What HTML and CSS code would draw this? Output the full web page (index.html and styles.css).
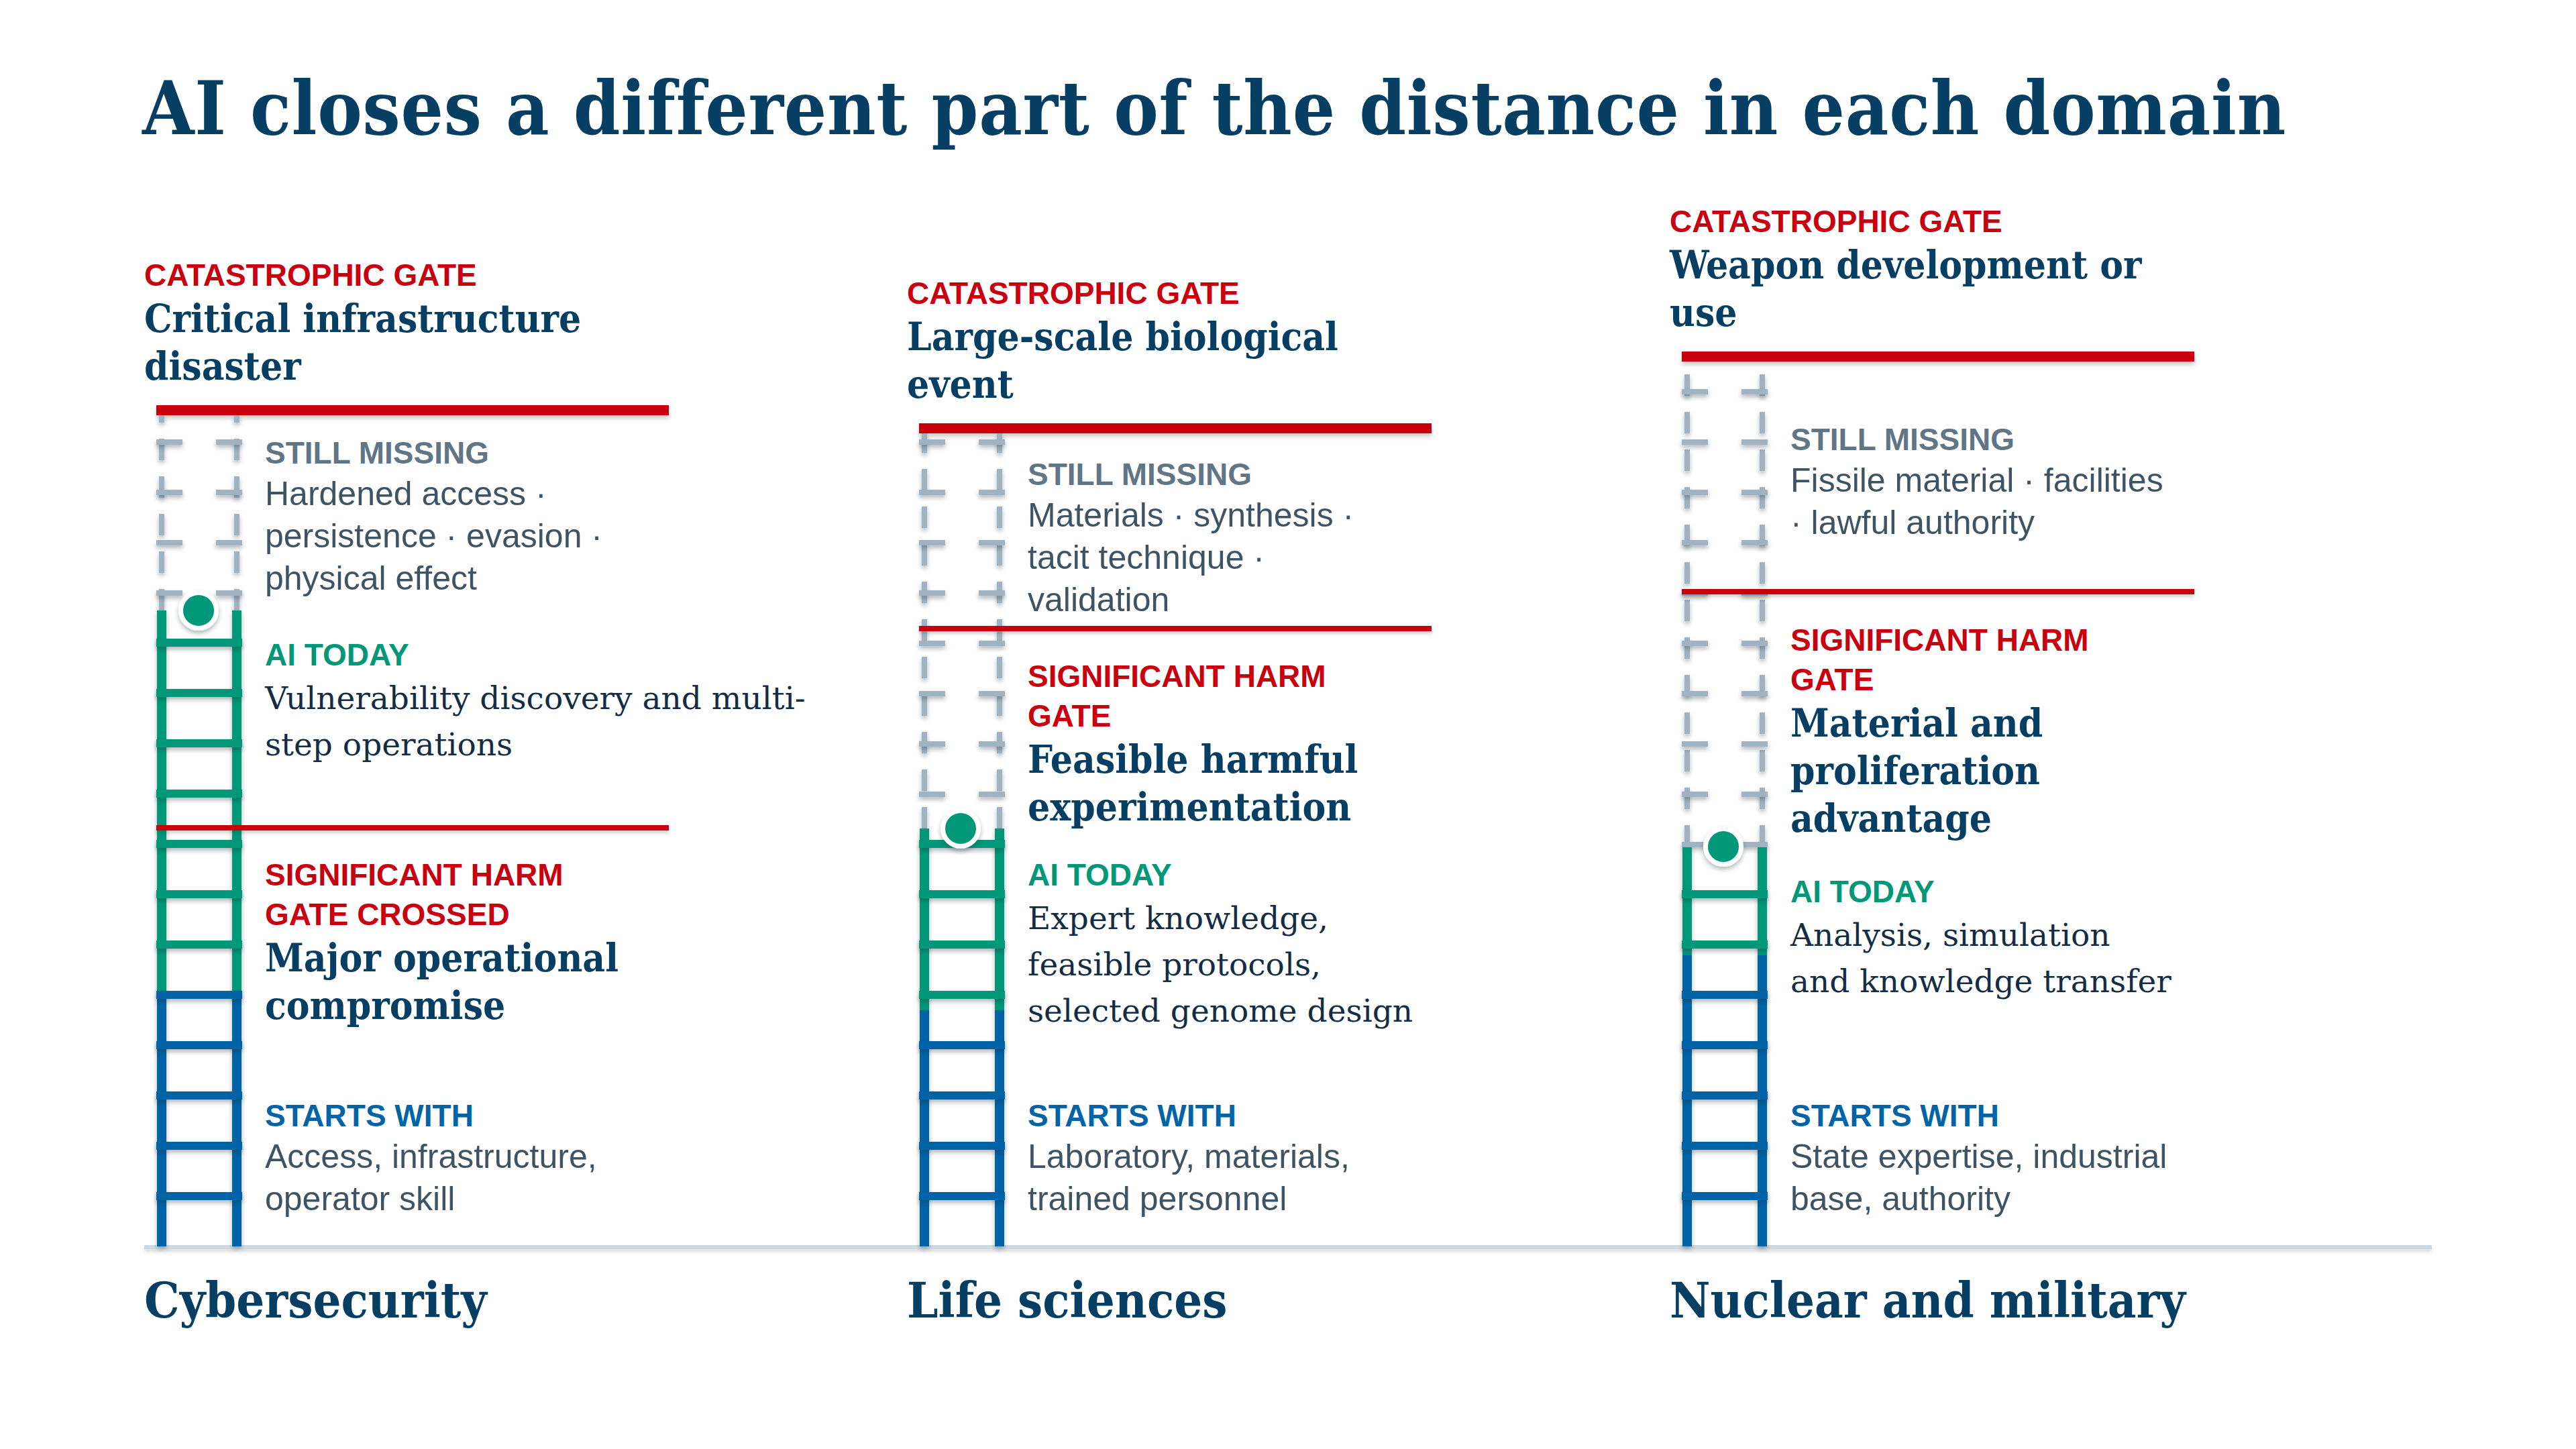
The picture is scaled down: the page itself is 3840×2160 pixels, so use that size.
FILE: index.html
```html
<!DOCTYPE html>
<html lang="en">
<head>
<meta charset="utf-8">
<title>AI closes a different part of the distance in each domain</title>
<link rel="stylesheet" href="styles.css">
</head>
<body>
<main class="page">
  <h1 class="title">AI closes a different part of the distance in each domain</h1>
  <section class="chart">
    <div class="cols">
      <!-- Column 1 -->
      <div class="col c1">
        <div class="head">
          <div class="label red">CATASTROPHIC GATE</div>
          <div class="gate-title">Critical infrastructure<br>disaster</div>
          <div class="gate-bar"></div>
        </div>
        <div class="body">
          <svg class="ladder" width="128" height="1239" viewBox="0 0 128 1239">
            <defs>
              <filter id="sh1" filterUnits="userSpaceOnUse" x="-30" y="-30" width="188" height="1299">
                <feDropShadow dx="0" dy="4" stdDeviation="3" flood-color="#1b2630" flood-opacity="0.33"/>
              </filter>
            </defs>
            <g class="dash" filter="url(#sh1)">
              <line x1="8" y1="291" x2="8" y2="0"/>
              <line x1="120" y1="291" x2="120" y2="0"/>
            </g>
            <g class="stub" filter="url(#sh1)">
              <rect x="0" y="261" width="39" height="8"/><rect x="89" y="261" width="39" height="8"/>
              <rect x="0" y="186" width="39" height="8"/><rect x="89" y="186" width="39" height="8"/>
              <rect x="0" y="111" width="39" height="8"/><rect x="89" y="111" width="39" height="8"/>
              <rect x="0" y="36" width="39" height="8"/><rect x="89" y="36" width="39" height="8"/>
            </g>
            <g class="green" filter="url(#sh1)">
              <rect x="1" y="291" width="14" height="567"/><rect x="113" y="291" width="14" height="567"/>
            </g>
            <g class="blue" filter="url(#sh1)">
              <rect x="1" y="858" width="14" height="381"/><rect x="113" y="858" width="14" height="381"/>
            </g>
            <g class="green" filter="url(#sh1)"><rect x="0" y="333" width="128" height="12"/></g>
            <g class="green" filter="url(#sh1)"><rect x="0" y="408" width="128" height="12"/></g>
            <g class="green" filter="url(#sh1)"><rect x="0" y="483" width="128" height="12"/></g>
            <g class="green" filter="url(#sh1)"><rect x="0" y="558" width="128" height="12"/></g>
            <g class="green" filter="url(#sh1)"><rect x="0" y="633" width="128" height="12"/></g>
            <g class="green" filter="url(#sh1)"><rect x="0" y="708" width="128" height="12"/></g>
            <g class="green" filter="url(#sh1)"><rect x="0" y="783" width="128" height="12"/></g>
            <g class="blue" filter="url(#sh1)"><rect x="0" y="858" width="128" height="12"/></g>
            <g class="blue" filter="url(#sh1)"><rect x="0" y="933" width="128" height="12"/></g>
            <g class="blue" filter="url(#sh1)"><rect x="0" y="1008" width="128" height="12"/></g>
            <g class="blue" filter="url(#sh1)"><rect x="0" y="1083" width="128" height="12"/></g>
            <g class="blue" filter="url(#sh1)"><rect x="0" y="1158" width="128" height="12"/></g>
            <circle class="dot" cx="63" cy="291" r="26.5" filter="url(#sh1)"/>
          </svg>
          <div class="text">
            <div class="sec missing">
              <div class="label gray">STILL MISSING</div>
              <div class="sans">Hardened access ·<br>persistence · evasion ·<br>physical effect</div>
            </div>
            <div class="sec ai">
              <div class="label green">AI TODAY</div>
              <div class="serif">Vulnerability discovery and multi-<br>step operations</div>
            </div>
            <div class="thin-gate"></div>
            <div class="sec harm">
              <div class="label red">SIGNIFICANT HARM<br>GATE CROSSED</div>
              <div class="gate-title">Major operational<br>compromise</div>
            </div>
            <div class="sec starts">
              <div class="label blue">STARTS WITH</div>
              <div class="sans">Access, infrastructure,<br>operator skill</div>
            </div>
          </div>
        </div>
      </div>

      <!-- Column 2 -->
      <div class="col c2">
        <div class="head">
          <div class="label red">CATASTROPHIC GATE</div>
          <div class="gate-title">Large-scale biological<br>event</div>
          <div class="gate-bar"></div>
        </div>
        <div class="body">
          <svg class="ladder" width="128" height="1212" viewBox="0 0 128 1212">
            <defs>
              <filter id="sh2" filterUnits="userSpaceOnUse" x="-30" y="-30" width="188" height="1272">
                <feDropShadow dx="0" dy="4" stdDeviation="3" flood-color="#1b2630" flood-opacity="0.33"/>
              </filter>
            </defs>
            <g class="dash" filter="url(#sh2)">
              <line x1="8" y1="589" x2="8" y2="0"/>
              <line x1="120" y1="589" x2="120" y2="0"/>
            </g>
            <g class="stub" filter="url(#sh2)">
              <rect x="0" y="534" width="39" height="8"/><rect x="89" y="534" width="39" height="8"/>
              <rect x="0" y="459" width="39" height="8"/><rect x="89" y="459" width="39" height="8"/>
              <rect x="0" y="384" width="39" height="8"/><rect x="89" y="384" width="39" height="8"/>
              <rect x="0" y="309" width="39" height="8"/><rect x="89" y="309" width="39" height="8"/>
              <rect x="0" y="234" width="39" height="8"/><rect x="89" y="234" width="39" height="8"/>
              <rect x="0" y="159" width="39" height="8"/><rect x="89" y="159" width="39" height="8"/>
              <rect x="0" y="84" width="39" height="8"/><rect x="89" y="84" width="39" height="8"/>
              <rect x="0" y="9" width="39" height="8"/><rect x="89" y="9" width="39" height="8"/>
            </g>
            <g class="green" filter="url(#sh2)">
              <rect x="1" y="589" width="14" height="271"/><rect x="113" y="589" width="14" height="271"/>
            </g>
            <g class="blue" filter="url(#sh2)">
              <rect x="1" y="860" width="14" height="352"/><rect x="113" y="860" width="14" height="352"/>
            </g>
            <g class="green" filter="url(#sh2)"><rect x="0" y="606" width="128" height="12"/></g>
            <g class="green" filter="url(#sh2)"><rect x="0" y="681" width="128" height="12"/></g>
            <g class="green" filter="url(#sh2)"><rect x="0" y="756" width="128" height="12"/></g>
            <g class="green" filter="url(#sh2)"><rect x="0" y="831" width="128" height="12"/></g>
            <g class="blue" filter="url(#sh2)"><rect x="0" y="906" width="128" height="12"/></g>
            <g class="blue" filter="url(#sh2)"><rect x="0" y="981" width="128" height="12"/></g>
            <g class="blue" filter="url(#sh2)"><rect x="0" y="1056" width="128" height="12"/></g>
            <g class="blue" filter="url(#sh2)"><rect x="0" y="1131" width="128" height="12"/></g>
            <circle class="dot" cx="62" cy="589" r="26.5" filter="url(#sh2)"/>
          </svg>
          <div class="text">
            <div class="sec missing">
              <div class="label gray">STILL MISSING</div>
              <div class="sans">Materials · synthesis ·<br>tacit technique ·<br>validation</div>
            </div>
            <div class="thin-gate"></div>
            <div class="sec harm">
              <div class="label red">SIGNIFICANT HARM<br>GATE</div>
              <div class="gate-title">Feasible harmful<br>experimentation</div>
            </div>
            <div class="sec ai">
              <div class="label green">AI TODAY</div>
              <div class="serif">Expert knowledge,<br>feasible protocols,<br>selected genome design</div>
            </div>
            <div class="sec starts">
              <div class="label blue">STARTS WITH</div>
              <div class="sans">Laboratory, materials,<br>trained personnel</div>
            </div>
          </div>
        </div>
      </div>

      <!-- Column 3 -->
      <div class="col c3">
        <div class="head">
          <div class="label red">CATASTROPHIC GATE</div>
          <div class="gate-title">Weapon development or<br>use</div>
          <div class="gate-bar"></div>
        </div>
        <div class="body">
          <svg class="ladder" width="128" height="1319" viewBox="0 0 128 1319">
            <defs>
              <filter id="sh3" filterUnits="userSpaceOnUse" x="-30" y="-30" width="188" height="1379">
                <feDropShadow dx="0" dy="4" stdDeviation="3" flood-color="#1b2630" flood-opacity="0.33"/>
              </filter>
            </defs>
            <g class="dash" filter="url(#sh3)">
              <line x1="8" y1="723" x2="8" y2="0"/>
              <line x1="120" y1="723" x2="120" y2="0"/>
            </g>
            <g class="stub" filter="url(#sh3)">
              <rect x="0" y="716" width="39" height="8"/><rect x="89" y="716" width="39" height="8"/>
              <rect x="0" y="641" width="39" height="8"/><rect x="89" y="641" width="39" height="8"/>
              <rect x="0" y="566" width="39" height="8"/><rect x="89" y="566" width="39" height="8"/>
              <rect x="0" y="491" width="39" height="8"/><rect x="89" y="491" width="39" height="8"/>
              <rect x="0" y="416" width="39" height="8"/><rect x="89" y="416" width="39" height="8"/>
              <rect x="0" y="341" width="39" height="8"/><rect x="89" y="341" width="39" height="8"/>
              <rect x="0" y="266" width="39" height="8"/><rect x="89" y="266" width="39" height="8"/>
              <rect x="0" y="191" width="39" height="8"/><rect x="89" y="191" width="39" height="8"/>
              <rect x="0" y="116" width="39" height="8"/><rect x="89" y="116" width="39" height="8"/>
              <rect x="0" y="41" width="39" height="8"/><rect x="89" y="41" width="39" height="8"/>
            </g>
            <g class="green" filter="url(#sh3)">
              <rect x="1" y="724" width="14" height="161"/><rect x="113" y="724" width="14" height="161"/>
            </g>
            <g class="blue" filter="url(#sh3)">
              <rect x="1" y="885" width="14" height="434"/><rect x="113" y="885" width="14" height="434"/>
            </g>
            <g class="green" filter="url(#sh3)"><rect x="0" y="788" width="128" height="12"/></g>
            <g class="green" filter="url(#sh3)"><rect x="0" y="863" width="128" height="12"/></g>
            <g class="blue" filter="url(#sh3)"><rect x="0" y="938" width="128" height="12"/></g>
            <g class="blue" filter="url(#sh3)"><rect x="0" y="1013" width="128" height="12"/></g>
            <g class="blue" filter="url(#sh3)"><rect x="0" y="1088" width="128" height="12"/></g>
            <g class="blue" filter="url(#sh3)"><rect x="0" y="1163" width="128" height="12"/></g>
            <g class="blue" filter="url(#sh3)"><rect x="0" y="1238" width="128" height="12"/></g>
            <circle class="dot" cx="62" cy="723" r="26.5" filter="url(#sh3)"/>
          </svg>
          <div class="text">
            <div class="sec missing">
              <div class="label gray">STILL MISSING</div>
              <div class="sans">Fissile material · facilities<br>· lawful authority</div>
            </div>
            <div class="thin-gate"></div>
            <div class="sec harm">
              <div class="label red">SIGNIFICANT HARM<br>GATE</div>
              <div class="gate-title">Material and<br>proliferation<br>advantage</div>
            </div>
            <div class="sec ai">
              <div class="label green">AI TODAY</div>
              <div class="serif">Analysis, simulation<br>and knowledge transfer</div>
            </div>
            <div class="sec starts">
              <div class="label blue">STARTS WITH</div>
              <div class="sans">State expertise, industrial<br>base, authority</div>
            </div>
          </div>
        </div>
      </div>
    </div>
    <div class="axis"></div>
    <div class="names">
      <div class="name">Cybersecurity</div>
      <div class="name">Life sciences</div>
      <div class="name">Nuclear and military</div>
    </div>
  </section>
</main>
</body>
</html>
```

FILE: styles.css
```css
html, body {
  margin: 0;
  padding: 0;
  background: #ffffff;
}

.page {
  width: 3840px;
  height: 2160px;
  box-sizing: border-box;
  padding: 101px 0 0 215px;
  overflow: hidden;
}

.title {
  margin: 0 0 0 -3px;
  font-family: "DejaVu Serif Condensed", "DejaVu Serif", serif;
  font-stretch: condensed;
  font-weight: 700;
  font-size: 111px;
  line-height: 120px;
  letter-spacing: 0.7px;
  color: #063f63;
  white-space: nowrap;
}

.chart {
  margin-top: 80px;
}

.cols {
  display: grid;
  grid-template-columns: 1137px 1137px 1fr;
  align-items: end;
}

.col {
  display: flex;
  flex-direction: column;
}

.label {
  font-family: "Liberation Sans", Arial, sans-serif;
  font-weight: 700;
  font-size: 46px;
  line-height: 59px;
  white-space: nowrap;
}

.label.red { color: #c8000f; }
.label.gray { color: #607585; }
.label.green { color: #009878; }
.label.blue { color: #0064a7; }

.gate-title {
  font-family: "DejaVu Serif Condensed", "DejaVu Serif", serif;
  font-stretch: condensed;
  font-weight: 700;
  font-size: 58px;
  line-height: 71px;
  color: #063f63;
  white-space: nowrap;
}

.gate-bar {
  width: 764px;
  height: 15px;
  margin: 22px 0 0 18px;
  background: #c8000d;
  box-shadow: 0 5px 6px rgba(30, 30, 30, 0.22);
}

.body {
  display: flex;
  align-items: stretch;
}

.ladder {
  flex: none;
  display: block;
  margin-left: 18px;
  overflow: visible;
}

.ladder .dash line {
  stroke: #9fb3c2;
  stroke-width: 8;
  stroke-dasharray: 32 24;
}

.ladder .stub rect { fill: #9fb3c2; }
.ladder .green rect { fill: #009878; }
.ladder .blue rect { fill: #0063a5; }

.ladder .dot {
  fill: #009878;
  stroke: #ffffff;
  stroke-width: 7;
}

.text {
  flex: 1;
  margin-left: 34px;
  display: flex;
  flex-direction: column;
  padding-bottom: 39px;
}

.sans {
  font-family: "Liberation Sans", Arial, sans-serif;
  font-size: 50px;
  line-height: 63px;
  color: #3e5465;
  white-space: nowrap;
}

.serif {
  font-family: "DejaVu Serif", serif;
  font-size: 47px;
  line-height: 69px;
  color: #142d45;
  white-space: nowrap;
}

.thin-gate {
  flex: none;
  width: 764px;
  height: 8px;
  margin-left: -162px;
  background: #c8000d;
  box-shadow: 0 4px 5px rgba(30, 30, 30, 0.2);
}

.starts { margin-top: auto; }

/* vertical placement of the steps on each ladder */
.c1 .missing { margin-top: 27px; }
.c1 .ai { margin-top: 53px; }
.c1 .thin-gate { margin-top: 86px; }
.c1 .harm { margin-top: 37px; }

.c2 .missing { margin-top: 32px; }
.c2 .thin-gate { margin-top: 7px; }
.c2 .harm { margin-top: 38px; }
.c2 .ai { margin-top: 36px; }

.c3 .missing { margin-top: 87px; }
.c3 .thin-gate { margin-top: 67px; }
.c3 .harm { margin-top: 39px; }
.c3 .ai { margin-top: 44px; }

.axis {
  width: 3410px;
  height: 6px;
  margin-top: -2px;
  background: #cddae4;
  box-shadow: 0 4px 5px rgba(40, 40, 40, 0.16);
}

.names {
  display: grid;
  grid-template-columns: 1137px 1137px 1fr;
  margin-top: 29px;
}

.name {
  font-family: "DejaVu Serif Condensed", "DejaVu Serif", serif;
  font-stretch: condensed;
  font-weight: 700;
  font-size: 73.5px;
  line-height: 94px;
  color: #063f63;
  white-space: nowrap;
}
```
